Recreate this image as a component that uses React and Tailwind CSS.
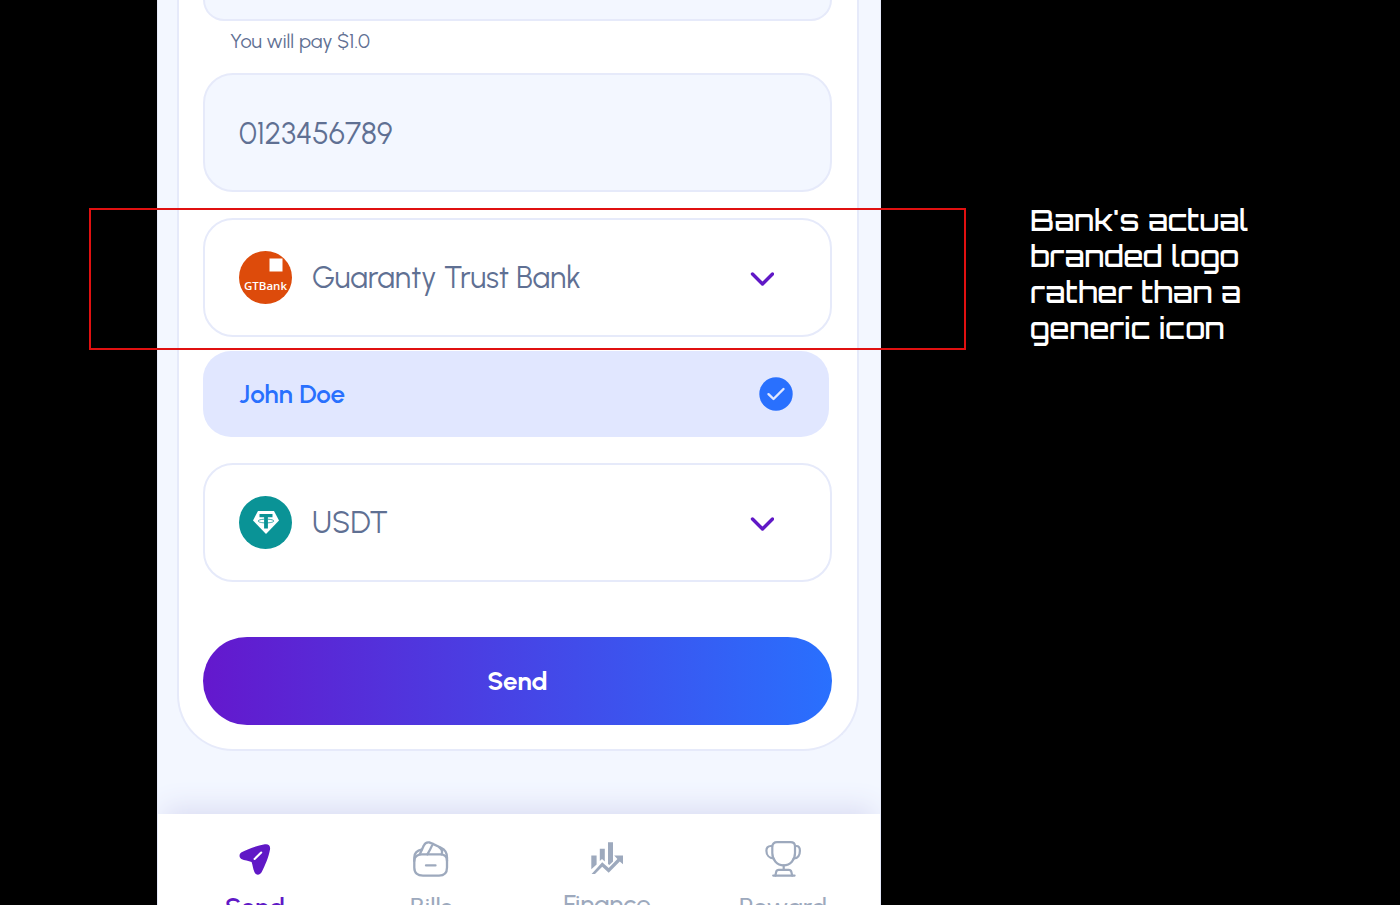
import React, { useState } from 'react';

const ChevronIcon = () => (
    <svg className="pointer-events-none h-4 w-6 shrink-0" viewBox="0 0 24 16" fill="none" stroke="#6018c6" strokeWidth="3.4" strokeLinecap="round" strokeLinejoin="round">
        <path d="M2.5 4L12.5 14L22.5 4" />
    </svg>
);

const GTBankLogo = () => (
    <svg className="h-[53px] w-[53px] shrink-0" viewBox="0 0 53 53">
        <circle cx="26.5" cy="26.5" r="26.5" fill="#dd4b0b" />
        <rect x="30.5" y="7.5" width="13" height="13" fill="#fff" />
        <text x="26.5" y="38.5" textAnchor="middle" fill="#fff" fontSize="11.5" fontWeight="600" fontFamily="'Open Sans', 'Noto Sans', sans-serif">
            GTBank
        </text>
    </svg>
);

const TetherLogo = () => (
    <svg className="h-[53px] w-[53px] shrink-0" viewBox="0 0 53 53">
        <circle cx="26.5" cy="26.5" r="26.5" fill="#0a9396" />
        <path d="M19 15H35L40 24.5L27 38L14 24.5Z" fill="#fff" />
        <path d="M20.5 18H33.5V21.2H28.9V32.5H25.1V21.2H20.5Z" fill="#0a9396" />
        <path d="M25.1 23.2C21.6 23.4 19.2 24.1 19.2 25C19.2 26.1 22.6 26.9 27 26.9C31.4 26.9 34.8 26.1 34.8 25C34.8 24.1 32.4 23.4 28.9 23.2" fill="none" stroke="#0a9396" strokeWidth="0.8" />
    </svg>
);

const SendIcon = () => (
    <svg className="h-9 w-9" viewBox="0 0 36 36">
        <path d="M4.6 11.2C11 7.8 19 5 27.8 3.3C31.6 2.7 33.6 4.8 33 8.4C31.8 15.8 28 24.5 24.6 31.2C22.6 34.6 18.9 34.4 17.4 30.9C15.9 27.4 15.8 24.6 14.6 21C11.5 19.6 7.5 19.4 4.3 17.9C1.9 16.6 1.9 12.7 4.6 11.2Z" fill="#6018c6" />
        <path d="M17.6 18L24.2 11.5" stroke="#fff" strokeWidth="2.1" strokeLinecap="round" />
    </svg>
);

const BillsIcon = () => (
    <svg className="h-9 w-9" viewBox="0 0 36 36" fill="none" stroke="currentColor" strokeWidth="2.3" strokeLinecap="round" strokeLinejoin="round">
        <path d="M9 13.3H27C31.5 13.3 34 15.8 34 19.5V26.5C34 32 31.5 34.6 26 34.6H10C4.5 34.6 1.3 32 1.3 26.5V19.5C1.3 15.8 4.5 13.3 9 13.3Z" />
        <path d="M1.3 20V16.5C1.3 12 4.3 9.3 9 8.4" />
        <path d="M34 20V16.5C34 11.5 32 8.6 28 6.8L19.8 2.9" />
        <path d="M6.8 13.3L10.8 4.6C11.9 2 13.8 1 16.2 1.4L19.8 2.9C18.2 6.5 16.5 10 14.4 13.3" />
        <path d="M26.2 6.2C28.8 8 29.8 10.2 28.6 13.2" />
        <path d="M13 24.4H22.5" />
    </svg>
);

const FinanceIcon = () => (
    <svg className="h-[33px] w-8" viewBox="0 -1 32 33" fill="currentColor">
        <path d="M0.3 13.5H5.6V22.5L0.3 27.3Z" />
        <path d="M8.8 6.8H13.8V19.6L11 16.9L8.8 19Z" />
        <path d="M17 0.3H22V19.6L18.3 23.1L17 22Z" />
        <path d="M23.2 13.5H32V22.3L28.8 19.4L17.7 30.7L11.2 24.8L4 32H0.6L11.2 20.3L17.7 26.1L26.4 17Z" />
    </svg>
);

const RewardIcon = () => (
    <svg className="h-9 w-9" viewBox="0 0 36 36" fill="none" stroke="currentColor" strokeWidth="2.2" strokeLinecap="round" strokeLinejoin="round">
        <path d="M12 1.2H25.5C28.2 1.2 30 2.8 30 5.5V12C30 18.8 25.4 24.4 18.6 24.4C12 24.4 7.3 18.8 7.3 12V5.5C7.3 2.8 9.2 1.2 12 1.2Z" />
        <path d="M7.3 5H5.8C2.9 5 1.4 7 1.4 9.7C1.4 14 4.3 17.2 8.6 17.5" />
        <path d="M30 5H31.4C34.1 5 34.9 7 34.9 9.7C34.9 14 32.8 17.2 28.7 17.5" />
        <path d="M18.7 24.4V28.7" />
        <path d="M8.2 34.6H29.6" />
        <path d="M10.4 34.6L11.2 30.8C11.5 29.5 12.4 28.8 13.8 28.8H23.7C25.1 28.8 26 29.5 26.3 30.8L27.2 34.6" />
    </svg>
);

const navItems = [
    { label: 'Send', icon: SendIcon },
    { label: 'Bills', icon: BillsIcon },
    { label: 'Finance', icon: FinanceIcon },
    { label: 'Reward', icon: RewardIcon }
];

/* Select row with a brand logo in front */
const SelectField = ({ label, logo, options }) => (
    <label className="flex h-[119px] items-center gap-5 rounded-[30px] border-2 border-[#e6eafa] bg-white pr-14 pl-[34px]">
        {logo}
        <select
            aria-label={label}
            className="h-12 min-w-0 flex-1 appearance-none bg-transparent text-[30px] text-[#5f7093] outline-none"
        >
            {options.map((option) => (
                <option key={option}>{option}</option>
            ))}
        </select>
        <ChevronIcon />
    </label>
);

const BottomNav = () => (
    <nav className="grid grid-cols-4 items-start bg-white px-[9px] pt-[27px] pb-8 shadow-[0_-12px_26px_-6px_#dadcf3]">
        {navItems.map(({ label, icon: Icon }) => (
            <a
                key={label}
                href="#"
                className={`flex flex-col items-center gap-[14px] text-[26px] leading-8 ${label === 'Send' ? 'font-semibold text-[#6018c6]' : 'font-medium text-[#9da9bd]'}`}
            >
                <Icon />
                {label}
            </a>
        ))}
    </nav>
);

const App = () => {
    const [amount, setAmount] = useState('');
    const [account, setAccount] = useState('0123456789');

    return (
        <div className="grid h-screen grid-cols-[157fr_724fr_519fr] overflow-hidden bg-black font-['Urbanist','Lato',sans-serif]">
            <main className="col-start-2 flex min-w-0 flex-col border-x border-[#e6eafa] bg-[#f3f7ff]">
                <form
                    onSubmit={(e) => e.preventDefault()}
                    className="mr-[21px] ml-[19px] flex shrink-0 flex-col rounded-b-[56px] border-2 border-t-0 border-[#e6eafa] bg-white pr-[25px] pb-6 pl-6"
                >
                    <input
                        id="amount"
                        aria-label="Amount"
                        value={amount}
                        onChange={(e) => setAmount(e.target.value)}
                        className="h-[21px] rounded-b-[30px] border-2 border-t-0 border-[#e6eafa] bg-[#f3f7ff] px-[34px] outline-none"
                    />
                    <label htmlFor="amount" className="mt-2 mb-5 pl-[27px] text-xl leading-6 text-[#5f7093]">
                        You will pay $1.0
                    </label>
                    <input
                        aria-label="Account number"
                        value={account}
                        onChange={(e) => setAccount(e.target.value)}
                        className="h-[119px] rounded-[30px] border-2 border-[#e6eafa] bg-[#f3f7ff] px-[34px] pt-0.5 text-[30px] text-[#5f7093] outline-none"
                    />

                    <div className="relative mt-[26px]">
                        <SelectField label="Bank" logo={<GTBankLogo />} options={['Guaranty Trust Bank']} />
                        {/* Highlight around the bank row */}
                        <div className="pointer-events-none absolute -top-[10px] -right-[134px] -bottom-[13px] -left-[114px] border-2 border-[#e01010]" />
                    </div>

                    <div className="mt-[14px] mr-[3px] flex h-[86px] items-center justify-between rounded-[28px] bg-[#e1e7ff] px-9">
                        <span className="text-[26px] leading-8 font-semibold text-[#2970fe]">John Doe</span>
                        <svg className="h-[34px] w-[34px]" viewBox="0 0 34 34" fill="none">
                            <circle cx="17" cy="17" r="16.7" fill="#2970fe" />
                            <path d="M9.5 17.2L14.5 22L24.5 12" stroke="#e1e7ff" strokeWidth="2.4" strokeLinecap="round" strokeLinejoin="round" />
                        </svg>
                    </div>

                    <div className="mt-[26px]">
                        <SelectField label="Currency" logo={<TetherLogo />} options={['USDT']} />
                    </div>

                    <button
                        type="submit"
                        className="mt-[55px] h-[88px] rounded-full bg-linear-to-r/srgb from-[#6418cd] to-[#2970fe] text-[26px] font-bold text-white"
                    >
                        Send
                    </button>
                </form>
                {/* keeps the nav shadow inside the phone */}
                <div className="shrink-0 overflow-hidden pt-[63px]">
                    <BottomNav />
                </div>
            </main>

            <aside className="pt-[202px] pl-[149px]">
                <p className="w-[240px] font-['Orbitron','DejaVu_Sans',sans-serif] text-[29px] leading-9 font-medium text-white">
                    Bank's actual branded logo rather than a generic icon
                </p>
            </aside>
        </div>
    );
};

export default App;
